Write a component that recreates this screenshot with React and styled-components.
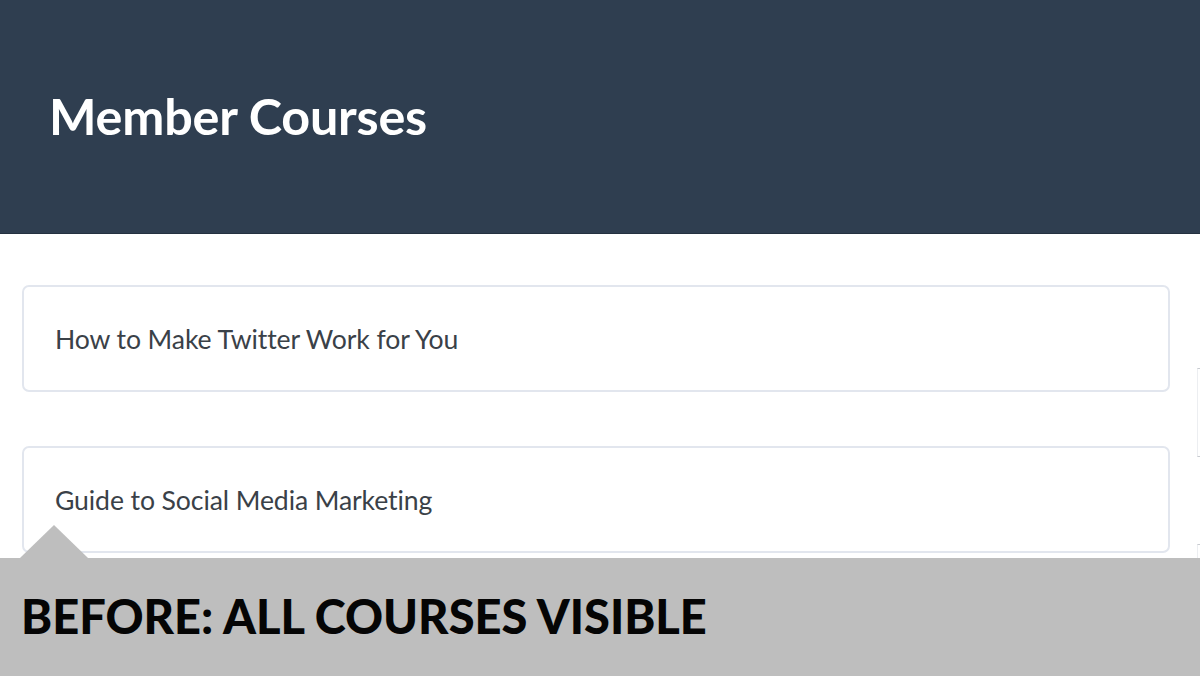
import React from 'react';
import styled, { createGlobalStyle } from 'styled-components';

const GlobalStyle = createGlobalStyle`
  html, body {
    margin: 0;
    padding: 0;
    background: #ffffff;
    overflow: hidden;
  }
  body {
    font-family: Lato, "Open Sans", sans-serif;
    width: 1200px;
    height: 676px;
  }
`;

const Page = styled.div`
  position: relative;
  width: 1200px;
  height: 676px;
  overflow: hidden;
`;

const Header = styled.header`
  background: #2f3e50;
  height: 234px;
  border-bottom: 1px solid #243140;
  display: flex;
  align-items: center;
  padding-left: 49px;
  box-sizing: border-box;
`;

const Title = styled.h1`
  margin: 0 0 2px;
  color: #ffffff;
  font-family: Lato, sans-serif;
  font-weight: 700;
  font-size: 50.3px;
  letter-spacing: -0.2px;
`;

const Content = styled.main`
  display: flex;
  gap: 27px;
  padding: 51px 0 0 22px;
`;

const CourseList = styled.div`
  display: flex;
  flex-direction: column;
  gap: 54px;
  width: 1148px;
  flex-shrink: 0;
`;

const CourseCard = styled.div`
  box-sizing: border-box;
  height: 107px;
  border: 2px solid #e2e6ee;
  border-radius: 7px;
  background: #ffffff;
  display: flex;
  align-items: center;
  padding-left: 31px;
`;

const CourseName = styled.span`
  color: #3a4148;
  font-size: 26.6px;
  font-weight: 400;
  letter-spacing: -0.1px;
`;

const Side = styled.aside`
  padding-top: 83px;
  flex-shrink: 0;
  width: 40px;
`;

const SideBox = styled.div`
  height: 87px;
  border-top: 1px solid #c8cbd0;
  border-left: 1px solid #eceef1;
  border-bottom: 1px solid #c8cbd0;
  margin-bottom: 87px;
`;

const Caption = styled.div`
  position: absolute;
  left: 0;
  right: 0;
  bottom: 0;
  height: 118px;
  background: #bebebe;
  display: flex;
  align-items: center;
  padding-left: 21px;
  box-sizing: border-box;

  &::before {
    content: '';
    position: absolute;
    left: 20px;
    top: -33px;
    border-left: 34px solid transparent;
    border-right: 34px solid transparent;
    border-bottom: 33px solid #bebebe;
  }
`;

const CaptionText = styled.span`
  color: #050505;
  font-family: Lato, sans-serif;
  font-weight: 900;
  font-size: 47px;
  letter-spacing: 0;
  margin-top: -3px;
`;

const courses = ['How to Make Twitter Work for You', 'Guide to Social Media Marketing'];

export default function App() {
  return (
    <Page>
      <GlobalStyle />
      <Header>
        <Title>Member Courses</Title>
      </Header>
      <Content>
        <CourseList>
          {courses.map((c) => (
            <CourseCard key={c}>
              <CourseName>{c}</CourseName>
            </CourseCard>
          ))}
        </CourseList>
        <Side>
          <SideBox />
          <SideBox />
        </Side>
      </Content>
      <Caption>
        <CaptionText>BEFORE: ALL COURSES VISIBLE</CaptionText>
      </Caption>
    </Page>
  );
}
